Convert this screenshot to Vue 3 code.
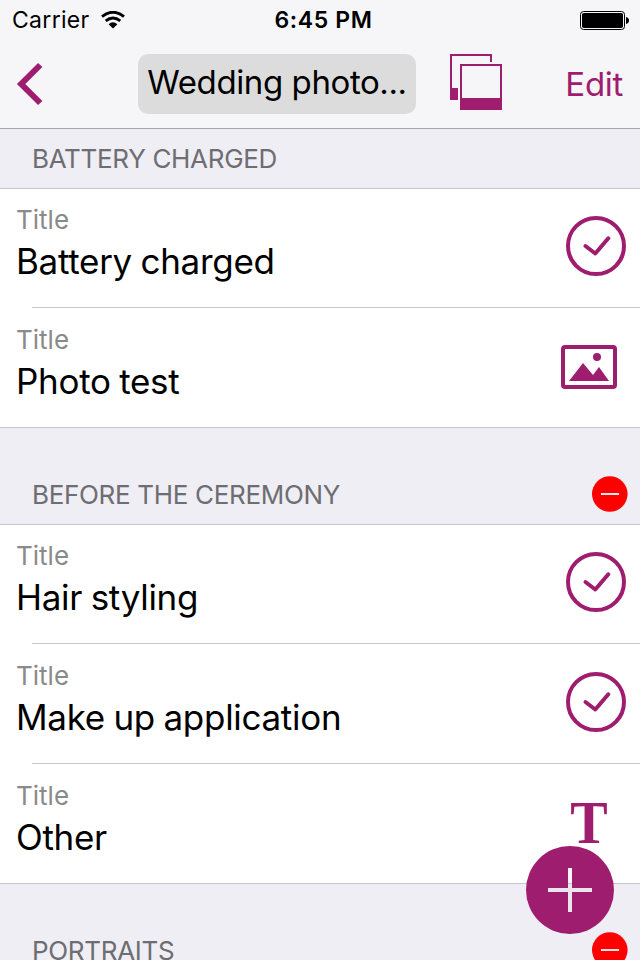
<script setup>
import { ref } from 'vue'

const listName = ref('Wedding photographer checklist')

const sections = ref([
  {
    id: 1,
    name: 'Battery charged',
    removable: false,
    items: [
      { id: 11, title: 'Battery charged', type: 'check' },
      { id: 12, title: 'Photo test', type: 'photo' }
    ]
  },
  {
    id: 2,
    name: 'Before the ceremony',
    removable: true,
    items: [
      { id: 21, title: 'Hair styling', type: 'check' },
      { id: 22, title: 'Make up application', type: 'check' },
      { id: 23, title: 'Other', type: 'text' }
    ]
  },
  {
    id: 3,
    name: 'Portraits',
    removable: true,
    items: []
  }
])

function shorten(text) {
  return text.length > 13 ? text.slice(0, 13) + '...' : text
}

function removeSection(id) {
  sections.value = sections.value.filter((s) => s.id !== id)
}
</script>

<template>
  <div class="screen">
    <header class="top">
      <div class="status-bar">
        <div class="status-left">
          <span class="carrier">Carrier</span>
          <svg class="wifi" width="24" height="18" viewBox="0 0 24 18">
            <path d="M1 5.6 Q12 -3 23 5.6" fill="none" stroke="#000" stroke-width="3" />
            <path d="M4.7 9.9 Q12 4 19.3 9.9" fill="none" stroke="#000" stroke-width="2.8" />
            <path d="M7.6 13.2 Q12 9.4 16.4 13.2 L12 17.6 Z" fill="#000" />
          </svg>
        </div>
        <span class="clock">6:45 PM</span>
        <div class="status-right">
          <svg width="50" height="20" viewBox="0 0 50 20">
            <rect x="0.5" y="1.5" width="44" height="18" rx="3" fill="none" stroke="#000" />
            <rect x="2" y="3" width="41" height="15" rx="1.8" fill="#000" />
            <path d="M46 7 Q49 7.6 49 10.5 Q49 13.4 46 14 Z" fill="#000" />
          </svg>
        </div>
      </div>

      <nav class="nav-bar">
        <button class="back" type="button" aria-label="Back">
          <svg width="28" height="44" viewBox="0 0 28 44">
            <path d="M24.2 3 L5.2 22 L24.2 41" fill="none" stroke="#9f1d6f" stroke-width="6" />
          </svg>
        </button>
        <button class="list-name" type="button">{{ shorten(listName) }}</button>
        <button class="gallery" type="button" aria-label="Photos">
          <svg width="52" height="56" viewBox="0 0 52 56" shape-rendering="crispEdges">
            <path d="M0 0 H42 V8 H40 V2 H2 V34 H8 V46 H0 Z" fill="#9f1d6f" />
            <path d="M10 10 H52 V56 H10 Z M12 12 V44 H50 V12 Z" fill="#9f1d6f" fill-rule="evenodd" />
          </svg>
        </button>
        <button class="edit" type="button">Edit</button>
      </nav>
    </header>

    <main class="list">
      <section v-for="section in sections" :key="section.id">
        <div class="section-head" :class="{ first: !section.removable }">
          <h2>{{ section.name }}</h2>
          <button
            v-if="section.removable"
            class="remove"
            type="button"
            aria-label="Remove section"
            @click="removeSection(section.id)"
          >
            <svg width="36" height="36" viewBox="0 0 36 36">
              <circle cx="17.8" cy="18" r="17.8" fill="#ff0000" />
              <rect x="9" y="17" width="18" height="2" fill="#fde4e6" />
            </svg>
          </button>
        </div>

        <ul v-if="section.items.length" class="rows">
          <li v-for="item in section.items" :key="item.id" class="row">
            <div class="row-text">
              <span class="label">Title</span>
              <span class="value">{{ item.title }}</span>
            </div>

            <svg v-if="item.type === 'check'" class="icon check" width="60" height="60" viewBox="0 0 60 60">
              <circle cx="30" cy="30" r="28" fill="none" stroke="#9f1d6f" stroke-width="4" />
              <path
                d="M19.5 30 L29.3 37.5 L42.3 22.3"
                fill="none"
                stroke="#9f1d6f"
                stroke-width="4"
                stroke-linecap="round"
                stroke-linejoin="round"
              />
            </svg>

            <svg v-else-if="item.type === 'photo'" class="icon photo" width="56" height="44" viewBox="0 0 56 44">
              <rect x="2" y="2" width="52" height="40" rx="2" fill="none" stroke="#9f1d6f" stroke-width="4" />
              <path d="M8 36 L22 18 L32 30 L38 22 L48 36 Z" fill="#9f1d6f" />
              <circle cx="36" cy="12" r="4" fill="#9f1d6f" />
            </svg>

            <span v-else class="icon letter">T</span>
          </li>
        </ul>
      </section>
    </main>

    <button class="add" type="button" aria-label="Add item">
      <!-- the plus is cut out, the list shows through it -->
      <svg width="88" height="88" viewBox="0 0 88 88">
        <path
          d="M0 44 A44 44 0 0 1 88 44 A44 44 0 0 1 0 44 Z M42 22 V42 H22 V46 H42 V66 H46 V46 H66 V42 H46 V22 Z"
          fill="#9f1d6f"
          fill-rule="evenodd"
        />
        <path d="M44 22 V66 M22 44 H66" fill="none" stroke="#9f1d6f" stroke-width="4" stroke-opacity="0.04" />
      </svg>
    </button>
  </div>
</template>

<style>
body {
  margin: 0;
  background: #efeff4;
}
</style>

<style scoped>
.screen {
  position: relative;
  width: 640px;
  height: 960px;
  overflow: hidden;
  background: #efeef4;
  color: #000;
  font-family: Inter, "Liberation Sans", sans-serif;
}

button {
  margin: 0;
  padding: 0;
  border: none;
  background: none;
  font-family: inherit;
  cursor: pointer;
}

svg {
  display: block;
}

.top {
  height: 129px;
  box-sizing: border-box;
  border-bottom: 1px solid #a7a7ab;
  background: #f6f6f8;
}

.status-bar {
  display: grid;
  grid-template-columns: 1fr auto 1fr;
  align-items: center;
  height: 40px;
  padding: 0 10px 0 12px;
}

.status-left {
  display: flex;
  align-items: center;
  gap: 12px;
}

.carrier {
  font-size: 23px;
  letter-spacing: 0.3px;
}

.wifi {
  margin-left: -1px;
}

.clock {
  padding-left: 5px;
  font-size: 23px;
  font-weight: 600;
  letter-spacing: 0.65px;
}

.status-right {
  display: flex;
  justify-content: flex-end;
}

.nav-bar {
  display: flex;
  align-items: center;
  height: 88px;
  padding: 0 17px 0 16px;
}

.back {
  width: 122px;
}

.list-name {
  width: 278px;
  height: 60px;
  padding-bottom: 4px;
  border-radius: 10px;
  background: #dcdcdc;
  color: #000;
  font-size: 33px;
  line-height: 56px;
  letter-spacing: -0.4px;
  white-space: nowrap;
}

.gallery {
  margin: -4px 0 0 34px;
}

.edit {
  margin-left: auto;
  color: #9f1d6f;
  font-size: 33px;
  line-height: 40px;
  letter-spacing: -0.3px;
}

.section-head {
  display: flex;
  align-items: flex-end;
  justify-content: space-between;
  height: 96px;
  box-sizing: border-box;
  padding: 0 12px 12px 32px;
}

.section-head.first {
  height: 59px;
}

.section-head h2 {
  margin: 0 0 2px;
  color: #6d6d72;
  font-size: 26px;
  font-weight: 400;
  line-height: 30px;
  letter-spacing: -0.32px;
  text-transform: uppercase;
}

.rows {
  margin: 0;
  padding: 0;
  list-style: none;
  border-top: 1px solid #c8c7cc;
  background: #fff;
}

.row {
  display: flex;
  align-items: flex-start;
  justify-content: space-between;
  height: 120px;
  box-sizing: border-box;
  padding-left: 16px;
  border-bottom: 1px solid transparent;
  /* inset separator, the last row gets a full one */
  background: linear-gradient(#c8c7cc, #c8c7cc) 32px 100% / 100% 1px no-repeat border-box;
}

.row:first-child {
  height: 119px;
}

.row:first-child > * {
  margin-top: -1px;
}

.row:last-child {
  background-position: 0 100%;
}

.row-text {
  display: flex;
  flex-direction: column;
  padding-top: 16px;
}

.label {
  color: #8a8a8a;
  font-size: 26px;
  line-height: 32px;
}

.value {
  margin-top: 4px;
  font-size: 35px;
  line-height: 42px;
  letter-spacing: -0.3px;
  word-spacing: -1px;
}

.icon {
  flex: none;
}

.check {
  padding: 28px 14px 0 0;
}

.photo {
  padding: 37px 23px 0 0;
}

.letter {
  margin: 29px 32px 0 0;
  color: #9f1d6f;
  font-family: "Liberation Serif", serif;
  font-size: 61px;
  font-weight: 700;
  line-height: 60px;
  transform: scaleX(0.92);
  transform-origin: 100% 50%;
}

.add {
  position: absolute;
  right: 26px;
  bottom: 26px;
  border-radius: 50%;
}
</style>
